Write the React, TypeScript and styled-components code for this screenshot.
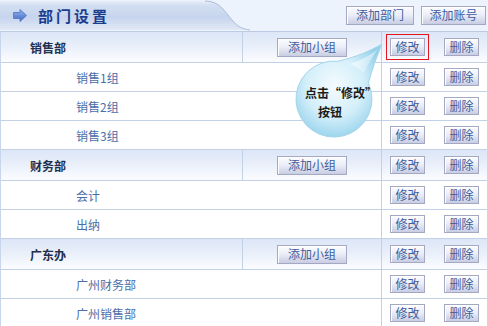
import styled, { createGlobalStyle } from 'styled-components'

const GlobalStyle = createGlobalStyle`
    html, body {
        margin: 0;
        padding: 0;
        background: #ffffff;
    }
    body {
        font-family: "Noto Sans CJK SC", "Noto Sans", sans-serif;
        font-size: 12px;
    }
`

interface Grupo {
    nome: string
    subgrupos: string[]
}

const grupos: Grupo[] = [
    { nome: '销售部', subgrupos: ['销售1组', '销售2组', '销售3组'] },
    { nome: '财务部', subgrupos: ['会计', '出纳'] },
    { nome: '广东办', subgrupos: ['广州财务部', '广州销售部'] },
]

const Painel = styled.div`
    position: relative;
    width: 488px;
    height: 326px;
    overflow: hidden;
`

const Cabecalho = styled.div`
    position: relative;
    height: 31px;
    border-bottom: 1px solid #bccbe3;
    background: #edf3fd;
    display: flex;
    align-items: center;
    justify-content: space-between;
`

const FundoAba = styled.svg`
    position: absolute;
    left: 0;
    top: 0;
`

const Titulo = styled.div`
    position: relative;
    display: flex;
    align-items: center;
    gap: 11px;
    padding-left: 13px;
    font-size: 15px;
    font-weight: bold;
    letter-spacing: 3px;
    color: #1b3d8e;
`

const BotoesCabecalho = styled.div`
    position: relative;
    display: flex;
    gap: 7px;
    padding-right: 2px;
    margin-top: -1px;
`

const Botao = styled.button<{ $largura: number; $destaque?: boolean }>`
    box-sizing: border-box;
    width: ${p => p.$largura}px;
    height: ${p => (p.$largura > 50 ? 19 : 18)}px;
    padding: 0;
    border: 1px solid #a4a8c0;
    box-shadow: inset 1px 1px 0 #ffffff;
    background: linear-gradient(#fcfcff 0%, #eceef8 45%, #c9cde3 100%);
    font-family: "Noto Sans CJK SC", sans-serif;
    font-size: 12px;
    line-height: 16px;
    color: #3d5d9b;
    outline: ${p => (p.$destaque ? '1px solid #e8141b' : 'none')};
    outline-offset: 3px;
`

const Tabela = styled.div`
    border-left: 1px solid #c8d6ec;
    border-right: 1px solid #c8d6ec;
`

const LinhaGrupo = styled.div`
    display: grid;
    grid-template-columns: 242px 139px 1fr;
    height: 30px;
    border-bottom: 1px solid #c3d1e6;
    background: linear-gradient(#dce6f7 0%, #eaf0fa 50%, #fbfcff 100%);
`

const LinhaSub = styled.div`
    display: grid;
    grid-template-columns: 381px 1fr;
    height: 28px;
    border-bottom: 1px solid #c3d1e6;
    background: #ffffff;
`

const Celula = styled.div<{ $recuo?: number; $borda?: boolean }>`
    display: flex;
    align-items: center;
    padding-left: ${p => p.$recuo ?? 0}px;
    border-right: ${p => (p.$borda ? '1px solid #c3d1e6' : 'none')};
`

const NomeGrupo = styled.span`
    font-weight: bold;
    color: #1f2f4f;
`

const NomeSub = styled.span`
    color: #4b6ea8;
`

const CelulaCentro = styled(Celula)`
    justify-content: center;
`

const Acoes = styled.div`
    display: flex;
    align-items: center;
    gap: 19px;
    padding-left: 8px;
`

const Balao = styled.svg`
    position: absolute;
    left: 290px;
    top: 40px;
`

const TextoBalao = styled.div`
    position: absolute;
    left: 305px;
    top: 83px;
    font-size: 12px;
    font-weight: bold;
    line-height: 19px;
    color: #1a1a1a;
    white-space: nowrap;
`

const LinhaBalao = styled.div<{ $recuo: number }>`
    padding-left: ${p => p.$recuo}px;
`

function Seta() {
    return (
        <svg width="14" height="13" viewBox="0 0 14 13">
            <defs>
                <linearGradient id="seta" x1="0" y1="0" x2="0" y2="1">
                    <stop offset="0" stopColor="#9ab8ee" />
                    <stop offset="1" stopColor="#3a66c2" />
                </linearGradient>
            </defs>
            <path d="M0.5 3.5 H7 V0.5 L13.5 6.5 L7 12.5 V9.5 H0.5 Z" fill="url(#seta)" stroke="#5a80cc" strokeWidth="1" />
        </svg>
    )
}

function Acao({ destaque }: { destaque?: boolean }) {
    return (
        <Acoes>
            <Botao $largura={35} $destaque={destaque}>修改</Botao>
            <Botao $largura={35}>删除</Botao>
        </Acoes>
    )
}

export default function App() {
    return (
        <Painel>
            <GlobalStyle />
            <Cabecalho>
                <FundoAba width="488" height="31">
                    <defs>
                        <linearGradient id="aba" x1="0" y1="0" x2="0" y2="1">
                            <stop offset="0" stopColor="#e8eef9" />
                            <stop offset="0.15" stopColor="#d3dff2" />
                            <stop offset="0.55" stopColor="#c6d4ed" />
                            <stop offset="1" stopColor="#e2e9f6" />
                        </linearGradient>
                    </defs>
                    <path d="M0 1 H205 C220 1 225 12 232 20 C238 27 242 29 250 30 H0 Z" fill="url(#aba)" />
                    <path d="M205 1 C220 1 225 12 232 20 C238 27 242 29 250 30" fill="none" stroke="#a9bcdb" strokeWidth="1" />
                </FundoAba>
                <Titulo>
                    <Seta />
                    部门设置
                </Titulo>
                <BotoesCabecalho>
                    <Botao $largura={68}>添加部门</Botao>
                    <Botao $largura={65}>添加账号</Botao>
                </BotoesCabecalho>
            </Cabecalho>
            <Tabela>
                {grupos.map((grupo, i) => (
                    <div key={grupo.nome}>
                        <LinhaGrupo>
                            <Celula $recuo={29} $borda>
                                <NomeGrupo>{grupo.nome}</NomeGrupo>
                            </Celula>
                            <CelulaCentro $borda>
                                <Botao $largura={70}>添加小组</Botao>
                            </CelulaCentro>
                            <Acao destaque={i === 0} />
                        </LinhaGrupo>
                        {grupo.subgrupos.map(sub => (
                            <LinhaSub key={sub}>
                                <Celula $recuo={75} $borda>
                                    <NomeSub>{sub}</NomeSub>
                                </Celula>
                                <Acao />
                            </LinhaSub>
                        ))}
                    </div>
                ))}
            </Tabela>
            <Balao width="100" height="104" viewBox="0 0 100 104">
                <defs>
                    <radialGradient id="balao" cx="0.45" cy="0.45" r="0.6">
                        <stop offset="0" stopColor="#f4fbfe" />
                        <stop offset="0.55" stopColor="#d4effa" />
                        <stop offset="1" stopColor="#92d0ea" />
                    </radialGradient>
                    <linearGradient id="brilho" x1="0" y1="0" x2="1" y2="1">
                        <stop offset="0" stopColor="#ffffff" stopOpacity="0.9" />
                        <stop offset="1" stopColor="#ffffff" stopOpacity="0" />
                    </linearGradient>
                </defs>
                <path
                    d="M48 21.3 C66 17 80 11 92 4 C86 18 82 30 78.4 43 A38 38 0 1 1 48 21.3 Z"
                    fill="url(#balao)"
                    stroke="#a6d6ea"
                    strokeWidth="1"
                />
                <path d="M60 24 C72 20 82 14 88 9 C80 20 76 28 74 34 C70 29 66 26 60 24 Z" fill="url(#brilho)" />
            </Balao>
            <TextoBalao>
                <LinhaBalao $recuo={0}>点击“修改”</LinhaBalao>
                <LinhaBalao $recuo={13}>按钮</LinhaBalao>
            </TextoBalao>
        </Painel>
    )
}
